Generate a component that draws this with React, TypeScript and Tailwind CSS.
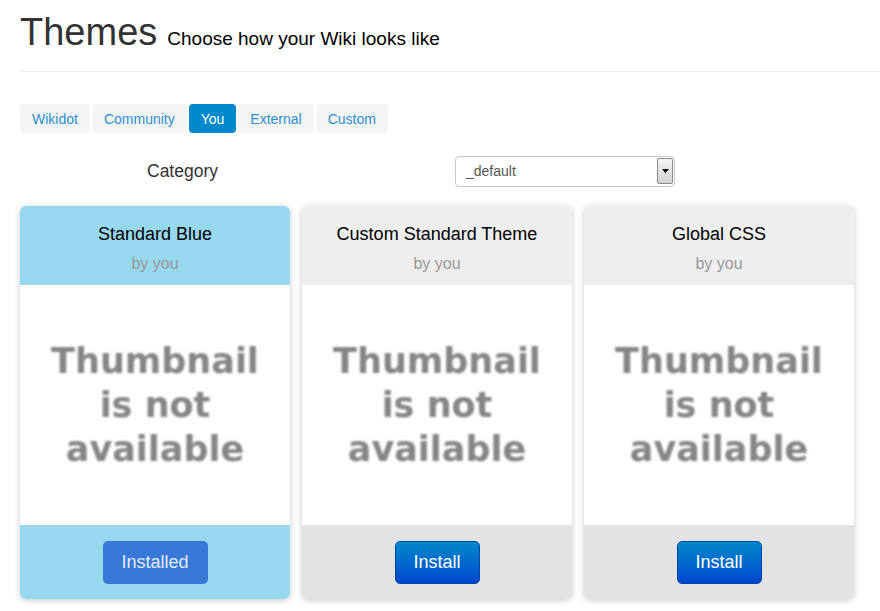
import React from "react";

const tabs = ["Wikidot", "Community", "You", "External", "Custom"];

const themes = [
  { name: "Standard Blue", installed: true },
  { name: "Custom Standard Theme", installed: false },
  { name: "Global CSS", installed: false },
];

function ThemeCard({ name, installed }: { name: string; installed: boolean }) {
  const head = installed ? "bg-[#97d8ef]" : "bg-[#eeeeee]";
  const foot = installed ? "bg-[#97d8ef]" : "bg-[#e3e3e3]";
  return (
    <div className="w-[270px] rounded-[6px] overflow-hidden shadow-[0_1px_6px_rgba(0,0,0,0.22)]">
      <div className={`${head} h-[79px] flex flex-col items-center pt-[18px]`}>
        <div className="text-[18px] leading-[20px] text-black">{name}</div>
        <div className="text-[16px] leading-[20px] text-[#999] mt-[10px]">by you</div>
      </div>
      <div className="bg-white h-[240px] flex items-center justify-center">
        <div
          className="text-center font-bold text-[#858585] text-[35px] leading-[44px] blur-[0.8px]"
          style={{ fontFamily: '"DejaVu Sans", Verdana, sans-serif' }}
        >
          Thumbnail
          <br />
          is not
          <br />
          available
        </div>
      </div>
      <div className={`${foot} h-[74px] flex items-center justify-center`}>
        {installed ? (
          <button className="h-[43px] w-[105px] rounded-[5px] bg-[#3778d8] text-[#e4ecf9] text-[18px]">
            Installed
          </button>
        ) : (
          <button className="h-[43px] w-[85px] rounded-[5px] bg-gradient-to-b from-[#0088cc] to-[#0044cc] border border-[#0044aa] text-white text-[18px]">
            Install
          </button>
        )}
      </div>
    </div>
  );
}

export default function App() {
  return (
    <div
      className="w-[880px] h-[611px] bg-white overflow-hidden"
      style={{ fontFamily: '"Liberation Sans", Arial, sans-serif' }}
    >
      <div className="pl-[20px] pt-[10px]">
        <div className="flex items-baseline gap-[10px] h-[50px]">
          <h1 className="text-[38px] leading-[44px] text-[#333]">Themes</h1>
          <span className="text-[19px] text-black">Choose how your Wiki looks like</span>
        </div>
        <div className="h-px bg-[#eeeeee] mt-[11px]" />

        <div className="flex gap-[2px] mt-[32px]">
          {tabs.map((t) => (
            <div
              key={t}
              className={`h-[29px] px-[12px] flex items-center rounded-[4px] text-[14px] pt-[1px] ${
                t === "You" ? "bg-[#0088cc] text-white" : "bg-[#f5f5f5] text-[#2a8fd3]"
              }`}
            >
              {t}
            </div>
          ))}
        </div>

        <div className="flex items-center mt-[23px] h-[30px]">
          <div className="w-[435px] pl-[127px]">
            <span className="text-[17.5px] text-[#333] pt-[2px]">Category</span>
          </div>
          <div className="w-[220px] h-[31px] border border-[#c8c8c8] rounded-[4px] flex items-center justify-between pl-[10px] pr-[1px]">
            <span className="text-[14px] text-[#555]">_default</span>
            <div className="w-[16px] h-[26px] border border-[#888] rounded-[2px] bg-gradient-to-b from-[#f4f4f4] to-[#d4d4d4] flex items-center justify-center">
              <svg width="7" height="4" viewBox="0 0 7 4">
                <path d="M0 0h7L3.5 4z" fill="#000" />
              </svg>
            </div>
          </div>
        </div>

        <div className="flex gap-[12px] mt-[20px]">
          {themes.map((t) => (
            <ThemeCard key={t.name} {...t} />
          ))}
        </div>
      </div>
    </div>
  );
}
